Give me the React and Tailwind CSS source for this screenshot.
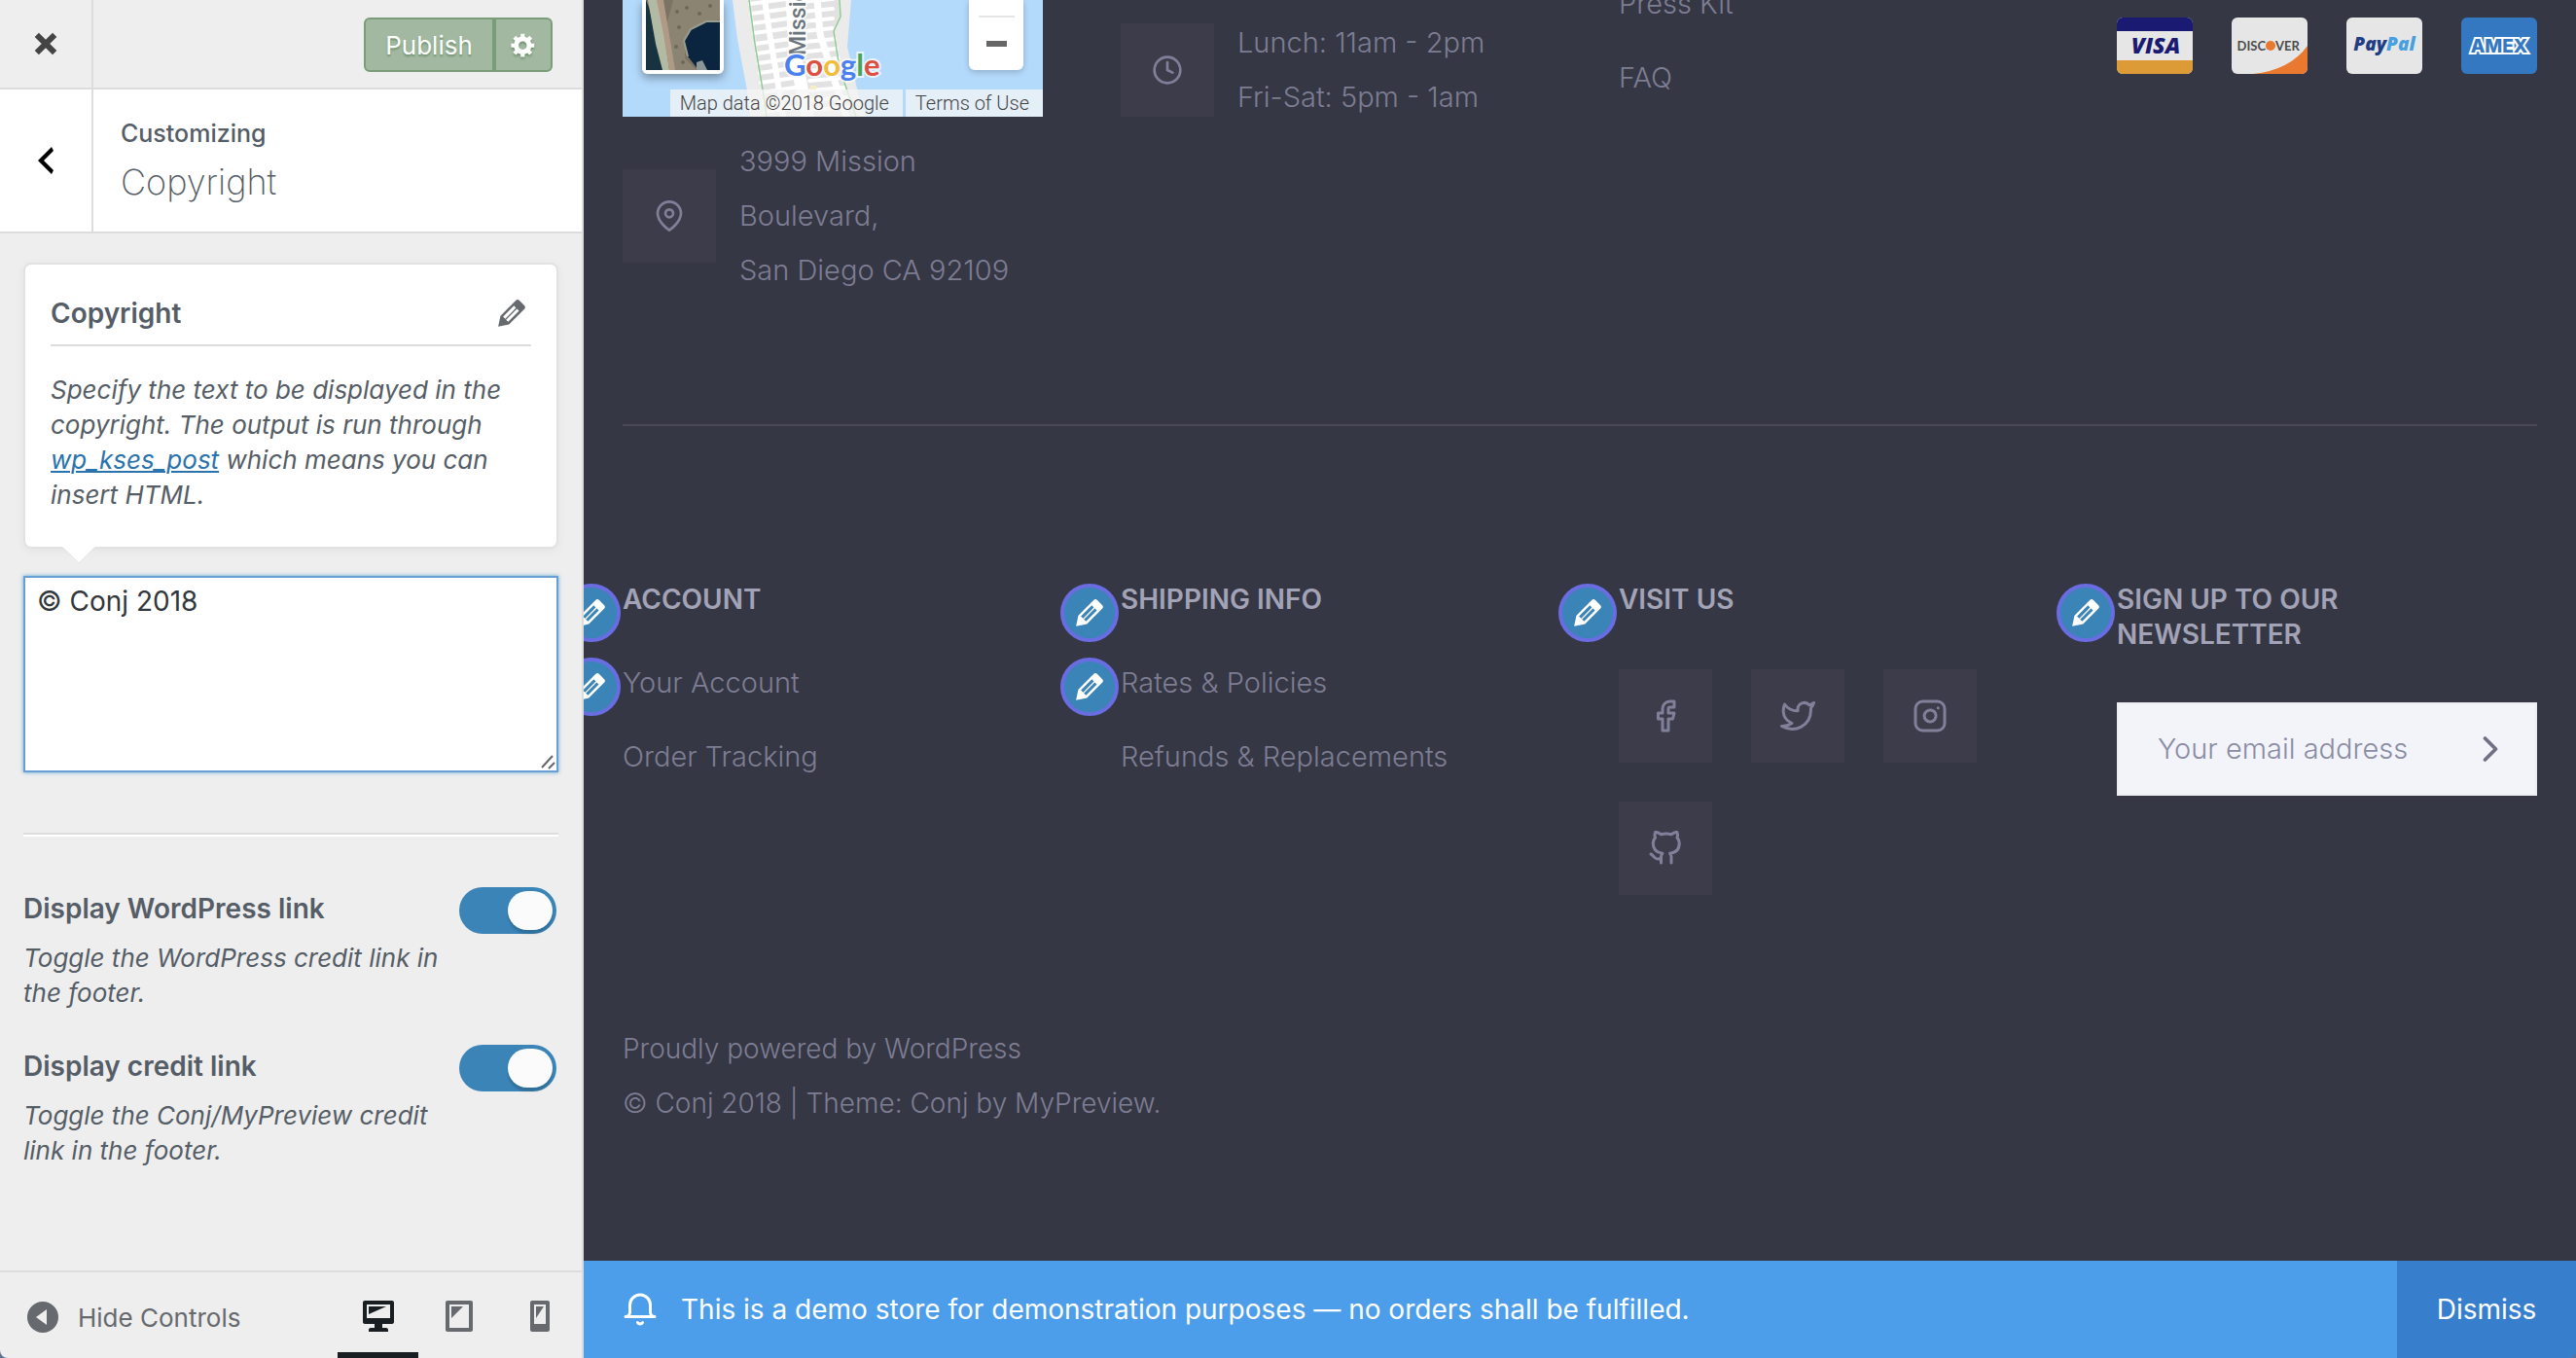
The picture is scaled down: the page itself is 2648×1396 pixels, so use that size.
import React from 'react';

const PENCIL =
  'M13.89 3.39l2.71 2.72c.46.46.42 1.24.03 1.64l-8.01 8.02-5.56 1.16 1.16-5.58s7.6-7.63 7.99-8.03c.39-.39 1.22-.39 1.68.07zm-2.73 2.79l-5.59 5.61 1.11 1.11 5.54-5.65zm-2.97 8.23l5.58-5.6-1.07-1.08-5.59 5.6z';

function Dashicon({ d, className = 'size-10' }) {
  return (
    <svg viewBox="0 0 20 20" fill="currentColor" aria-hidden="true" className={className}>
      <path d={d} fillRule="evenodd" />
    </svg>
  );
}

function LineIcon({ children, className = 'size-9' }) {
  return (
    <svg
      viewBox="0 0 24 24"
      fill="none"
      stroke="currentColor"
      strokeWidth="2"
      strokeLinecap="round"
      strokeLinejoin="round"
      aria-hidden="true"
      className={`shrink-0 ${className}`}
    >
      {children}
    </svg>
  );
}

function EditBadge({ label }) {
  return (
    <button
      type="button"
      aria-label={label}
      className="absolute top-0.5 -left-[62px] flex size-[60px] items-center justify-center rounded-full border-4 border-[#6a6de2] bg-[#3a84b7] text-white"
    >
      <Dashicon d={PENCIL} className="size-10 shrink-0" />
    </button>
  );
}

function IconBox({ children }) {
  return (
    <span className="flex size-24 shrink-0 items-center justify-center bg-[#3c3c4a] text-[#80809a]">{children}</span>
  );
}

/* ---------- Sidebar ---------- */

function SidebarHeader() {
  return (
    <header className="shrink-0">
      <div className="flex h-[92px] border-b-2 border-[#ddd]">
        <button
          type="button"
          aria-label="Close"
          className="flex w-24 items-center justify-center border-r-2 border-[#ddd] text-[#444]"
        >
          <Dashicon d="M12.12 10l3.53 3.53-2.12 2.12L10 12.12l-3.54 3.54-2.12-2.12L7.88 10 4.34 6.46l2.12-2.12L10 7.88l3.54-3.53 2.12 2.12z" />
        </button>
        <div className="flex flex-1 items-center justify-end pt-0.5 pr-[30px]">
          <button
            type="button"
            className="h-14 w-[134px] rounded-l-md border-2 border-[#7a9d79] bg-[#a2b8a1] text-[26px] text-white [text-shadow:0_2px_2px_#6f936e]"
          >
            Publish
          </button>
          <button
            type="button"
            aria-label="Publish settings"
            className="flex h-14 w-[60px] items-center justify-center rounded-r-md border-2 border-[#7a9d79] bg-[#a2b8a1] text-white"
          >
            <Dashicon
              className="size-7 drop-shadow-[0_2px_1px_#6f936e]"
              d="M18 12h-2.18c-.17.7-.44 1.35-.81 1.93l1.54 1.54-2.1 2.1-1.54-1.54c-.58.36-1.23.63-1.91.79V19H8v-2.18c-.68-.16-1.33-.43-1.91-.79l-1.54 1.54-2.12-2.12 1.54-1.54c-.36-.58-.63-1.23-.79-1.91H1V9.03h2.17c.16-.7.44-1.35.8-1.94L2.43 5.55l2.1-2.1 1.54 1.54c.58-.37 1.24-.64 1.93-.81V2h3v2.18c.68.16 1.33.43 1.91.79l1.54-1.54 2.12 2.12-1.54 1.54c.36.59.64 1.24.8 1.94H18V12zm-8.5 1.5c1.66 0 3-1.34 3-3s-1.34-3-3-3-3 1.34-3 3 1.34 3 3 3z"
            />
          </button>
        </div>
      </div>
      <div className="flex h-[148px] border-b-2 border-[#ddd] bg-white">
        <button
          type="button"
          aria-label="Back"
          className="flex w-24 items-center justify-center border-r-2 border-[#ddd] text-black"
        >
          <Dashicon d="M14 5l-5 5 5 5-1 2-7-7 7-7z" />
        </button>
        <div className="flex flex-col justify-center pl-7">
          <p className="text-[25px] leading-9 font-medium">Customizing</p>
          <h1 className="pt-2 text-[36px] leading-[48px] font-extralight">Copyright</h1>
        </div>
      </div>
    </header>
  );
}

function Toggle({ id, label, description }) {
  return (
    <div className="flex justify-between gap-3">
      <div className="flex-1">
        <label htmlFor={id} className="block text-[28px] leading-9 font-semibold">
          {label}
        </label>
        <p className="pt-[15px] text-[26px] leading-9 italic">{description}</p>
      </div>
      <span className="relative mr-0.5 -mt-1 block h-12 w-[100px] shrink-0">
        <input
          id={id}
          type="checkbox"
          role="switch"
          defaultChecked
          className="peer size-full appearance-none rounded-full bg-[#b5bcc2] checked:bg-[#3a84b7]"
        />
        <span className="pointer-events-none absolute top-1 left-1 h-10 w-[46px] rounded-full bg-[#fbfbfb] shadow-[0_4px_2px_rgba(0,0,0,0.15)] peer-checked:left-[50px]" />
      </span>
    </div>
  );
}

function SidebarFooter() {
  const devices = [
    {
      name: 'Desktop',
      d: 'M3 2h14c.55 0 1 .45 1 1v10c0 .55-.45 1-1 1h-5v2h2c.55 0 1 .45 1 1v1H5v-1c0-.55.45-1 1-1h2v-2H3c-.55 0-1-.45-1-1V3c0-.55.45-1 1-1zm13 9V4H4v7h12zM5 5h9L5 9V5z',
      style: 'border-[#191e23] text-[#191e23]',
    },
    {
      name: 'Tablet',
      d: 'M4 2h12c.55 0 1 .45 1 1v14c0 .55-.45 1-1 1H4c-.55 0-1-.45-1-1V3c0-.55.45-1 1-1zm11 14V4H5v12h10zM6 5h6l-6 6z',
      style: 'border-transparent text-[#66696d]',
    },
    {
      name: 'Mobile',
      d: 'M6 2h8c.55 0 1 .45 1 1v14c0 .55-.45 1-1 1H6c-.55 0-1-.45-1-1V3c0-.55.45-1 1-1zm7 12V4H7v10h6zM8 5h4l-4 6z',
      style: 'border-transparent text-[#66696d]',
    },
  ];
  return (
    <footer className="flex h-[90px] shrink-0 items-stretch justify-between border-t-2 border-[#ddd] text-[#66696d]">
      <button type="button" className="flex items-center gap-5 pt-1 pl-7 text-[26px]">
        <svg viewBox="0 0 32 32" className="size-8" aria-hidden="true">
          <circle cx="16" cy="16" r="16" fill="currentColor" />
          <path d="M20 8v16L9 16z" fill="#eee" />
        </svg>
        Hide Controls
      </button>
      <div className="flex pr-0.5">
        {devices.map((v) => (
          <button
            key={v.name}
            type="button"
            aria-label={v.name}
            className={`flex w-[83px] items-center justify-center border-b-[6px] pt-2 ${v.style}`}
          >
            <Dashicon d={v.d} />
          </button>
        ))}
      </div>
    </footer>
  );
}

function Sidebar() {
  return (
    <aside className="flex w-[600px] shrink-0 flex-col rounded-bl-lg border-r-2 border-[#ddd] bg-[#eee] text-[#555d66]">
      <SidebarHeader />
      <div className="flex-1 px-6 pt-[30px]">
        <section className="relative rounded-lg border-2 border-[#e2e2e2] bg-white px-[26px] pt-8 pb-[35px] shadow-[0_2px_10px_rgba(0,0,0,0.05)]">
          <div className="flex items-center justify-between border-b-2 border-[#ddd] pb-3.5">
            <label htmlFor="copyright" className="text-[28px] leading-9 font-semibold">
              Copyright
            </label>
            <button type="button" aria-label="Edit" className="-my-1 text-[#66696d]">
              <Dashicon d={PENCIL} />
            </button>
          </div>
          <p className="pt-[27px] text-[26px] leading-9 italic">
            Specify the text to be displayed in the copyright. The output is run through{' '}
            <a href="#kses" className="text-[#2a73ad] underline decoration-2 underline-offset-2">
              wp_kses_post
            </a>{' '}
            which means you can insert HTML.
          </p>
          <svg viewBox="0 0 34 18" className="absolute top-full left-[38px] h-[18px] w-[34px]" aria-hidden="true">
            <path d="M0 0l17 17L34 0z" fill="#fff" />
            <path d="M1 1l16 16L33 1" fill="none" stroke="#e4e4e4" />
          </svg>
        </section>
        <div className="relative mt-7">
          <textarea
            id="copyright"
            defaultValue="© Conj 2018"
            className="block h-[202px] w-full resize-none border-2 border-[#6a9fd6] bg-white px-3 py-1.5 text-[28px] leading-9 text-[#32373c] shadow-[0_0_4px_rgba(30,140,190,0.7)] outline-none"
          />
          <svg
            viewBox="0 0 16 16"
            className="pointer-events-none absolute right-[3px] bottom-[3px] size-4"
            stroke="#666"
            strokeWidth="2"
            aria-hidden="true"
          >
            <path d="M2 14L13 2M9 15l6-6" />
          </svg>
        </div>
        <hr className="mt-[62px] h-1 border-t-2 border-b-2 border-t-[#ddd] border-b-white" />
        <div className="flex flex-col gap-[39px] pt-14">
          <Toggle
            id="wp-link"
            label="Display WordPress link"
            description="Toggle the WordPress credit link in the footer."
          />
          <Toggle
            id="credit-link"
            label="Display credit link"
            description="Toggle the Conj/MyPreview credit link in the footer."
          />
        </div>
      </div>
      <SidebarFooter />
    </aside>
  );
}

/* ---------- Map ---------- */

function MapDrawing() {
  const streets = [0, 10, 20, 30, 41, 51, 61, 71, 81, 91, 101, 111];
  return (
    <svg viewBox="0 0 432 120" preserveAspectRatio="xMidYMid slice" className="size-full" aria-hidden="true">
      <rect width="432" height="120" fill="#b3d9fb" />
      <path d="M113 0L118 40L128 93L131 120H250L243 100L231 48L235 0z" fill="#ebebeb" />
      <path d="M132 0H222L223 16L216 32L222 70L238 120H149L144 88z" fill="#e2e2e2" />
      <g stroke="#fff" strokeLinecap="round" fill="none">
        {streets.map((y, i) => (
          <path key={y} d={`M${131 + i * 1.4} ${y + 4}L${168 + i} ${y - 1}`} strokeWidth="4" />
        ))}
        {streets.map((y, i) => (
          <path key={y} d={`M${184 + i} ${y + 2}L${216 + Math.max(0, i - 3) * 2} ${y - 1}`} strokeWidth="4" />
        ))}
        <path d="M146 0L152 40L162 100L165 120" strokeWidth="6" />
        <path d="M174 0L178 60L186 100L190 120" strokeWidth="13" />
        <path d="M200 0L203 35L217 80L230 120" strokeWidth="7" />
      </g>
      <rect x="193" y="88" width="6" height="4" fill="#f8edc9" />
      <path d="M130 0L136 45L144 92L148 120" fill="none" stroke="#8fcb96" strokeWidth="1.5" />
      <path d="M223 0L224 17L217 32L223 70L240 120" fill="none" stroke="#8fcb96" strokeWidth="1.5" />
      <text
        transform="translate(188 57) rotate(-90)"
        fontFamily="Roboto"
        fontSize="23"
        fontWeight="500"
        fill="#6b757b"
        stroke="#fff"
        strokeWidth="3"
        paintOrder="stroke"
      >
        Mission
      </text>
      <text
        x="166"
        y="78"
        fontFamily="Lato"
        fontSize="31"
        fontWeight="700"
        stroke="#fff"
        strokeOpacity="0.7"
        strokeWidth="4"
        paintOrder="stroke"
      >
        <tspan fill="#4a80f0">G</tspan>
        <tspan fill="#dd4f3f">o</tspan>
        <tspan fill="#f3bc36">o</tspan>
        <tspan fill="#4a80f0">g</tspan>
        <tspan fill="#4aa35a">l</tspan>
        <tspan fill="#dd4f3f">e</tspan>
      </text>
    </svg>
  );
}

function SatelliteDrawing() {
  return (
    <svg viewBox="0 0 76 72" className="block h-[72px] w-[76px]" aria-hidden="true">
      <rect width="76" height="72" fill="#7b7465" />
      <path d="M28 0H76V20L58 24L40 40L40 60L52 72H30L20 30z" fill="#8b8473" />
      <path d="M0 0L4 10L12 45L18 72H0z" fill="#16333f" />
      <path d="M2 0H12L18 30L24 72H17L10 45z" fill="#b3baa4" />
      <path d="M11 0H18L30 72H24L18 35z" fill="#b09a86" />
      <path d="M76 22H62L46 30L39 42L43 58L54 72H76z" fill="#0b2540" />
      <path d="M76 22H62L46 30L39 42L43 58" fill="none" stroke="#9a9c8c" strokeWidth="2" />
      <path d="M52 72V64L58 62L63 72z" fill="#8b9696" />
      <g fill="#6e685b">
        <circle cx="32" cy="12" r="2" />
        <circle cx="42" cy="8" r="2" />
        <circle cx="55" cy="14" r="2" />
        <circle cx="66" cy="6" r="2" />
        <circle cx="34" cy="28" r="2" />
        <circle cx="31" cy="48" r="2" />
        <circle cx="38" cy="64" r="2" />
      </g>
    </svg>
  );
}

function MapWidget() {
  return (
    <div className="relative h-[120px] overflow-hidden bg-[#b3d9fb]">
      <MapDrawing />
      <button
        type="button"
        aria-label="Show satellite imagery"
        className="absolute top-0 left-5 rounded-b-md border-4 border-t-0 border-white shadow-[0_4px_10px_rgba(0,0,0,0.35)]"
      >
        <SatelliteDrawing />
      </button>
      <button
        type="button"
        aria-label="Zoom out"
        className="absolute top-0 right-5 flex h-[72px] w-14 flex-col items-center rounded-b-md bg-white pt-4 shadow-[0_2px_6px_rgba(0,0,0,0.2)]"
      >
        <span className="h-0.5 w-[37px] bg-[#e6e6e6]" />
        <span className="mt-6 h-1.5 w-[21px] bg-[#666]" />
      </button>
      <div className="absolute right-0 bottom-0 flex gap-[3px] font-['Roboto',sans-serif] text-xl leading-7 text-[#444]">
        <span className="bg-[#f5f5f5]/75 pr-3.5 pl-2.5">Map data ©2018 Google</span>
        <a href="#terms" className="bg-[#f5f5f5]/75 pr-3.5 pl-2.5">
          Terms of Use
        </a>
      </div>
    </div>
  );
}

/* ---------- Payment cards ---------- */

function PaymentCards() {
  const card = 'h-[58px] w-[78px] rounded-md';
  const text = { fontFamily: 'Open Sans', textAnchor: 'middle' };
  return (
    <div className="flex justify-between pt-[18px]">
      <svg viewBox="0 0 78 58" className={card} role="img" aria-label="Visa card">
        <rect width="78" height="58" fill="#e6e6e6" />
        <rect width="78" height="14" fill="#1a1a72" />
        <rect y="44" width="78" height="14" fill="#dc9b37" />
        <text x="40" y="37" {...text} fontSize="23" fontWeight="800" fontStyle="italic" fill="#1a1a72">
          VISA
        </text>
      </svg>
      <svg viewBox="0 0 78 58" className={card} role="img" aria-label="Discover card">
        <rect width="78" height="58" fill="#e6e6e6" />
        <path d="M22 58Q60 54 78 29V58z" fill="#e8792e" />
        <text x="35" y="34" textAnchor="end" fontFamily="Lato" fontSize="13" fontWeight="700" fill="#4c4c4c">
          DISC
        </text>
        <circle cx="40" cy="29" r="5" fill="#e8792e" />
        <text x="45" y="34" fontFamily="Lato" fontSize="13" fontWeight="700" fill="#4c4c4c">
          VER
        </text>
      </svg>
      <svg viewBox="0 0 78 58" className={card} role="img" aria-label="PayPal">
        <rect width="78" height="58" fill="#e6e6e6" />
        <text x="39" y="34" {...text} fontSize="19" fontWeight="800" fontStyle="italic">
          <tspan fill="#1f3e83">Pay</tspan>
          <tspan fill="#469fdf">Pal</tspan>
        </text>
      </svg>
      <svg viewBox="0 0 78 58" className={card} role="img" aria-label="American Express">
        <rect width="78" height="58" fill="#3478c1" />
        <text
          x="39"
          y="36"
          textAnchor="middle"
          fontFamily="Inter"
          fontSize="19"
          fontWeight="800"
          fill="#3478c1"
          stroke="#fff"
          strokeWidth="4"
          paintOrder="stroke"
        >
          AMEX
        </text>
      </svg>
    </div>
  );
}

/* ---------- Store footer preview ---------- */

function LinkList({ items, editable }) {
  return (
    <div className="relative">
      {editable && <EditBadge label="Edit menu" />}
      <ul className="flex flex-col gap-5 text-[29px] leading-[56px] font-light">
        {items.map((t) => (
          <li key={t}>
            <a href="#page">{t}</a>
          </li>
        ))}
      </ul>
    </div>
  );
}

function Heading({ children }) {
  return (
    <div className="relative pb-10">
      <EditBadge label="Edit widget" />
      <h2 className="max-w-[300px] text-[28px] leading-9 font-semibold text-[#a3a3b7] uppercase">{children}</h2>
    </div>
  );
}

function SocialLinks() {
  const networks = [
    {
      name: 'Facebook',
      icon: <path d="M18 2h-3a5 5 0 0 0-5 5v3H7v4h3v8h4v-8h3l1-4h-4V7a1 1 0 0 1 1-1h3z" />,
    },
    {
      name: 'Twitter',
      icon: (
        <path d="M23 3a10.9 10.9 0 0 1-3.14 1.53 4.48 4.48 0 0 0-7.86 3v1A10.66 10.66 0 0 1 3 4s-4 9 5 13a11.64 11.64 0 0 1-7 2c9 5 20 0 20-11.5a4.5 4.5 0 0 0-.08-.83A7.72 7.72 0 0 0 23 3z" />
      ),
    },
    {
      name: 'Instagram',
      icon: (
        <>
          <rect x="2" y="2" width="20" height="20" rx="5" />
          <path d="M16 11.37A4 4 0 1 1 12.63 8 4 4 0 0 1 16 11.37zM17.5 6.5h.01" />
        </>
      ),
    },
    {
      name: 'GitHub',
      icon: (
        <path d="M9 19c-5 1.5-5-2.5-7-3m14 6v-3.87a3.37 3.37 0 0 0-.94-2.61c3.14-.35 6.44-1.54 6.44-7A5.44 5.44 0 0 0 20 4.77 5.07 5.07 0 0 0 19.91 1S18.73.65 16 2.48a13.38 13.38 0 0 0-7 0C6.27.65 5.09 1 5.09 1A5.07 5.07 0 0 0 5 4.77a5.44 5.44 0 0 0-1.5 3.78c0 5.42 3.3 6.61 6.44 7A3.37 3.37 0 0 0 9 18.13V22" />
      ),
    },
  ];
  return (
    <div className="flex flex-wrap gap-10 pt-3.5">
      {networks.map((n) => (
        <a key={n.name} href="#social" aria-label={n.name}>
          <IconBox>
            <LineIcon>{n.icon}</LineIcon>
          </IconBox>
        </a>
      ))}
    </div>
  );
}

function Preview() {
  return (
    <main className="flex min-w-0 flex-1 flex-col overflow-hidden rounded-br-lg bg-[#363744] text-[#7d7d93]">
      <div className="px-10">
        <div className="grid grid-cols-4 gap-x-20 border-b-2 border-[#484955] pb-[130px] text-[29px] leading-[56px] font-light">
          <div>
            <MapWidget />
            <div className="flex items-center gap-6 pt-[18px]">
              <IconBox>
                <LineIcon className="size-8">
                  <path d="M21 10c0 7-9 13-9 13s-9-6-9-13a9 9 0 0 1 18 0z" />
                  <circle cx="12" cy="10" r="3" />
                </LineIcon>
              </IconBox>
              <p>
                3999 Mission
                <br />
                Boulevard,
                <br />
                San Diego CA 92109
              </p>
            </div>
          </div>
          <div className="flex items-center gap-6 self-start pt-4">
            <IconBox>
              <LineIcon className="size-8">
                <circle cx="12" cy="12" r="10" />
                <path d="M12 6v6l4 2" />
              </LineIcon>
            </IconBox>
            <p>
              Lunch: 11am - 2pm
              <br />
              Fri-Sat: 5pm - 1am
            </p>
          </div>
          <div className="-mt-6">
            <LinkList items={['Press Kit', 'FAQ']} />
          </div>
          <PaymentCards />
        </div>

        <div className="grid grid-cols-4 gap-x-20 pt-40">
          <section>
            <Heading>Account</Heading>
            <LinkList editable items={['Your Account', 'Order Tracking']} />
          </section>
          <section>
            <Heading>Shipping info</Heading>
            <LinkList editable items={['Rates & Policies', 'Refunds & Replacements']} />
          </section>
          <section>
            <Heading>Visit us</Heading>
            <SocialLinks />
          </section>
          <section>
            <Heading>Sign up to our newsletter</Heading>
            <form className="mt-3 flex h-24 border-2 border-[#edeef4] bg-[#f3f4fa]">
              <input
                type="email"
                aria-label="Your email address"
                placeholder="Your email address"
                className="min-w-0 flex-1 bg-transparent pl-10 text-[29px] font-light text-[#6f6f85] outline-none placeholder:text-[#8a8ca3]"
              />
              <button
                type="button"
                aria-label="Subscribe"
                className="flex w-23 items-center justify-center text-[#6f6f85]"
              >
                <LineIcon className="size-11">
                  <path d="M9 18l6-6-6-6" />
                </LineIcon>
              </button>
            </form>
          </section>
        </div>

        <div className="pt-[130px] text-[28px] leading-[56px] font-light">
          <p>
            <a href="#wordpress">Proudly powered by WordPress</a>
          </p>
          <p>
            © Conj 2018 | Theme: Conj by <a href="#mypreview">MyPreview.</a>
          </p>
        </div>
      </div>

      <div className="mt-auto flex h-[100px] shrink-0 items-stretch bg-[#4c9dea] text-[28px] text-white">
        <p className="flex flex-1 items-center gap-6 pl-10">
          <LineIcon>
            <path d="M22 17H2a3 3 0 0 0 3-3V9a7 7 0 0 1 14 0v5a3 3 0 0 0 3 3zm-8.27 4a2 2 0 0 1-3.46 0" />
          </LineIcon>
          This is a demo store for demonstration purposes — no orders shall be fulfilled.
        </p>
        <button type="button" className="w-46 bg-[#377fcd]">
          Dismiss
        </button>
      </div>
    </main>
  );
}

export default function App() {
  return (
    <div className="flex h-screen overflow-hidden bg-[#5f7494] font-['Inter',sans-serif]">
      <Sidebar />
      <Preview />
    </div>
  );
}
